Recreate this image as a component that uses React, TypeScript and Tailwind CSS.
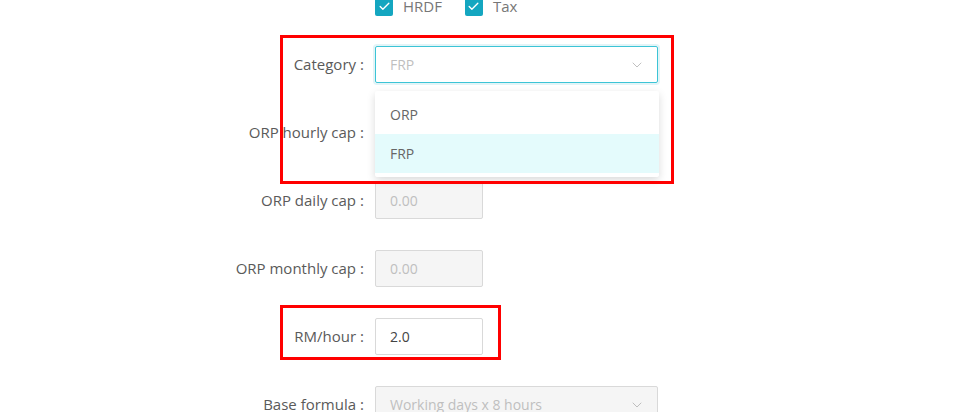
import { ChevronDown, Check } from "lucide-react";

const font = { fontFamily: '"Open Sans", "Noto Sans", sans-serif' };

const Label = ({ text }: { text: string }) => (
  <div className="w-[375px] shrink-0 flex justify-end items-center pr-[11px] text-[15px] text-[#5a5a5a]">
    <span>{text}</span>
    <span className="ml-[4px]">:</span>
  </div>
);

const Field = ({ label, children }: { label: string; children?: React.ReactNode }) => (
  <div className="flex items-center h-[37px]">
    <Label text={label} />
    {children}
  </div>
);

const NumberBox = ({ value, disabled }: { value: string; disabled?: boolean }) => (
  <div
    className={
      disabled
        ? "w-[108px] h-[37px] border border-[#d9d9d9] rounded-[2px] bg-[#f5f5f5] flex items-center px-[14px] text-[14px] text-[#bfbfbf]"
        : "w-[108px] h-[37px] border border-[#d9d9d9] rounded-[2px] bg-white flex items-center px-[14px] text-[14px] text-[#444]"
    }
  >
    {value}
  </div>
);

const CheckItem = ({ label }: { label: string }) => (
  <div className="flex items-center gap-[10px]">
    <div className="w-[18px] h-[18px] rounded-[2px] bg-[#14a6c0] flex items-center justify-center">
      <Check size={13} strokeWidth={2.5} color="white" />
    </div>
    <span className="text-[15px] text-[#777]">{label}</span>
  </div>
);

export default function App() {
  return (
    <div style={font} className="relative w-[978px] h-[412px] overflow-hidden bg-white">
      <div className="flex flex-col -mt-[12px]">
        <div className="flex items-center h-[37px] pl-[375px] gap-[23px]">
          <CheckItem label="HRDF" />
          <CheckItem label="Tax" />
        </div>
        <div className="flex flex-col gap-[31px] mt-[21px]">
          <Field label="Category">
            <div className="w-[283px] h-[37px] border border-[#3cc4d6] rounded-[2px] shadow-[0_0_0_2px_rgba(20,166,192,0.12)] flex items-center justify-between pl-[14px] pr-[12px] text-[14px] text-[#bfbfbf]">
              <span>FRP</span>
              <ChevronDown size={16} strokeWidth={1.2} color="#b0b0b0" />
            </div>
          </Field>
          <Field label="ORP hourly cap">
            <NumberBox value="0.00" disabled />
          </Field>
          <Field label="ORP daily cap">
            <NumberBox value="0.00" disabled />
          </Field>
          <Field label="ORP monthly cap">
            <NumberBox value="0.00" disabled />
          </Field>
          <Field label="RM/hour">
            <NumberBox value="2.0" />
          </Field>
          <Field label="Base formula">
            <div className="w-[283px] h-[37px] border border-[#d9d9d9] rounded-[2px] bg-[#f5f5f5] flex items-center justify-between pl-[14px] pr-[12px] text-[14px] text-[#bfbfbf]">
              <span>Working days x 8 hours</span>
              <ChevronDown size={16} strokeWidth={1.2} color="#b0b0b0" />
            </div>
          </Field>
        </div>
      </div>

      <div className="absolute left-[375px] top-[91px] w-[284px] py-[4px] bg-white rounded-[2px] shadow-[0_3px_8px_rgba(0,0,0,0.15)] text-[14px] text-[#666]">
        <div className="h-[39px] flex items-center px-[15px]">ORP</div>
        <div className="h-[39px] flex items-center px-[15px] bg-[#e4fbfc]">FRP</div>
      </div>

      <div className="absolute left-[280px] top-[35px] w-[394px] h-[149px] border-[3px] border-[#ff0000]" />
      <div className="absolute left-[280px] top-[305px] w-[221px] h-[55px] border-[3px] border-[#ff0000]" />
    </div>
  );
}
